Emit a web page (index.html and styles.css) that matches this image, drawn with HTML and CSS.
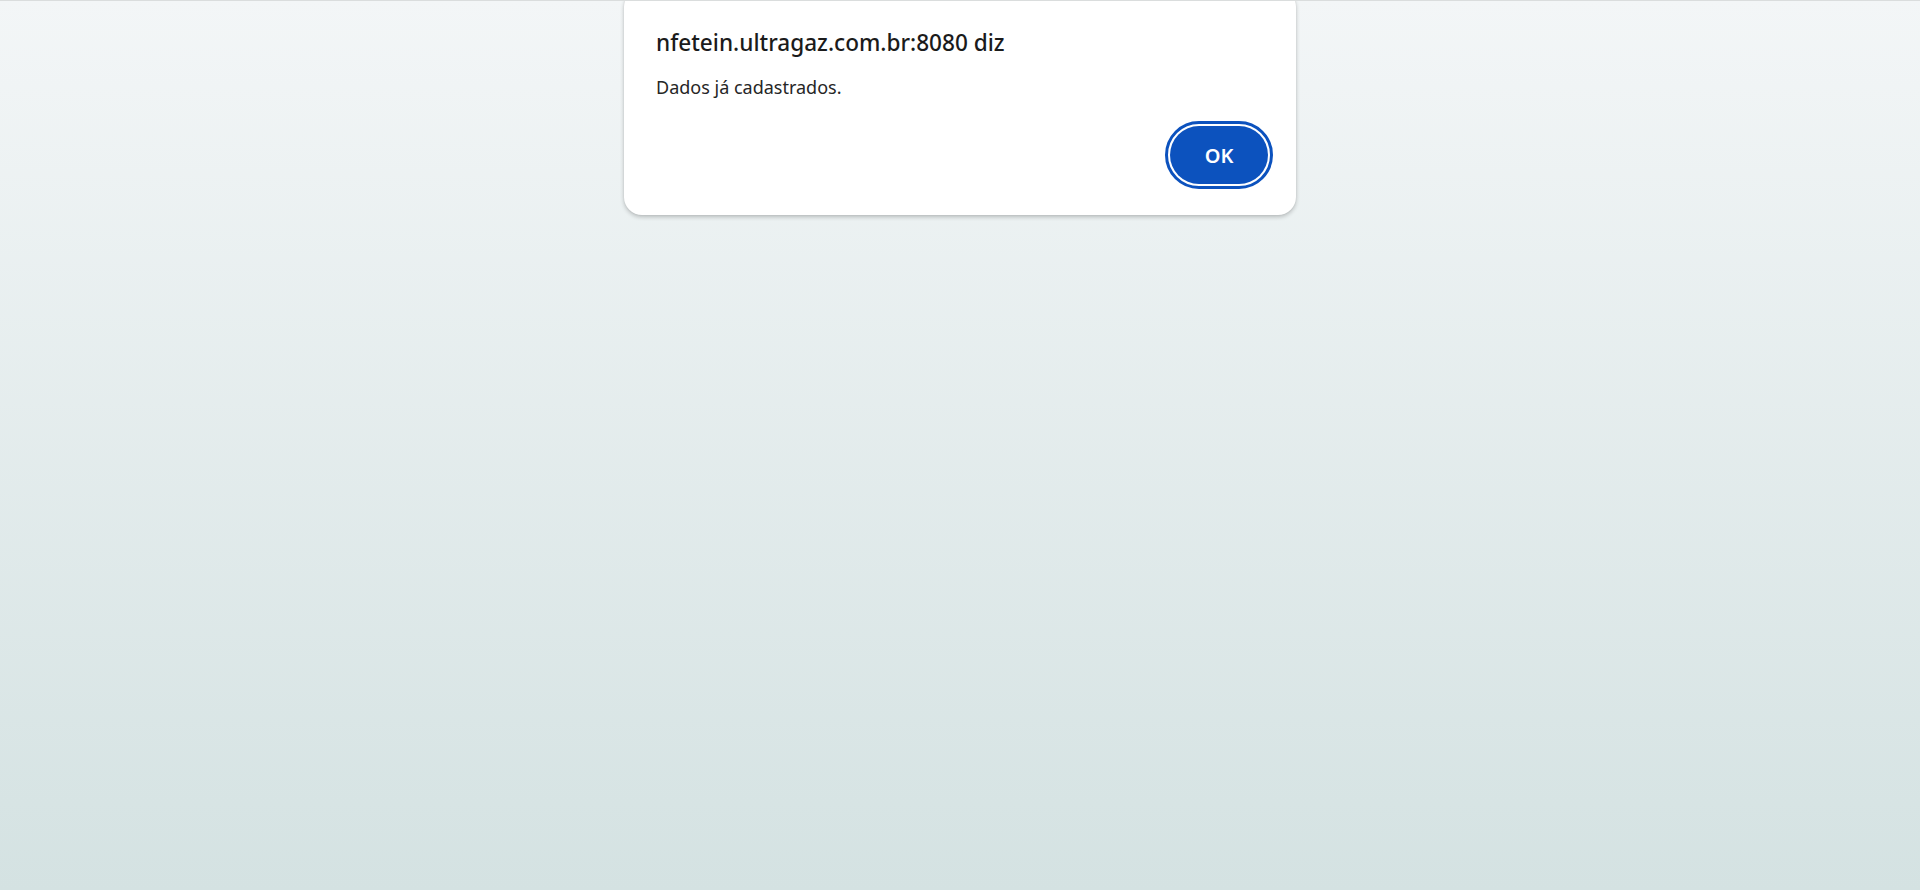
FILE: index.html
```html
<!DOCTYPE html>
<html lang="pt-BR">
<head>
<meta charset="utf-8">
<title>nfetein.ultragaz.com.br</title>
<link rel="stylesheet" href="styles.css">
</head>
<body>
<div class="page">
  <div class="dialog" role="alertdialog" aria-labelledby="dlg-title">
    <div class="dialog-title" id="dlg-title">nfetein.ultragaz.com.br:8080 diz</div>
    <div class="dialog-message">Dados já cadastrados.</div>
    <div class="dialog-actions">
      <button class="btn-ok" type="button">OK</button>
    </div>
  </div>
</div>
</body>
</html>
```

FILE: styles.css
```css
html, body {
  margin: 0;
  height: 100%;
}

body {
  box-sizing: border-box;
  border-top: 1px solid #dadddd;
  background: linear-gradient(180deg, #f3f6f7 0%, #d4e2e2 100%);
  font-family: "Noto Sans", "Open Sans", sans-serif;
  color: #1f1f1f;
  overflow: hidden;
}

.page {
  display: flex;
  justify-content: center;
}

.dialog {
  box-sizing: border-box;
  width: 672px;
  margin-top: -12px;
  padding: 38px 28px 31px 32px;
  background: #ffffff;
  border-radius: 18px;
  box-shadow: 0 2px 4px rgba(0, 0, 0, 0.22), 0 0 2px rgba(0, 0, 0, 0.08);
  display: flex;
  flex-direction: column;
}

.dialog-title {
  font-size: 22.6px;
  font-weight: 500;
  line-height: 31px;
  color: #1b1b1b;
}

.dialog-message {
  margin-top: 15px;
  font-size: 18px;
  line-height: 28px;
  color: #262626;
}

.dialog-actions {
  margin-top: 25px;
  display: flex;
  justify-content: flex-end;
}

.btn-ok {
  width: 98px;
  height: 58px;
  border: none;
  border-radius: 29px;
  background: #0c52be;
  color: #ffffff;
  font-family: "Noto Sans", "Open Sans", sans-serif;
  font-size: 20px;
  font-weight: 600;
  outline: 3px solid #0c52be;
  outline-offset: 2px;
  padding: 0;
}
```
